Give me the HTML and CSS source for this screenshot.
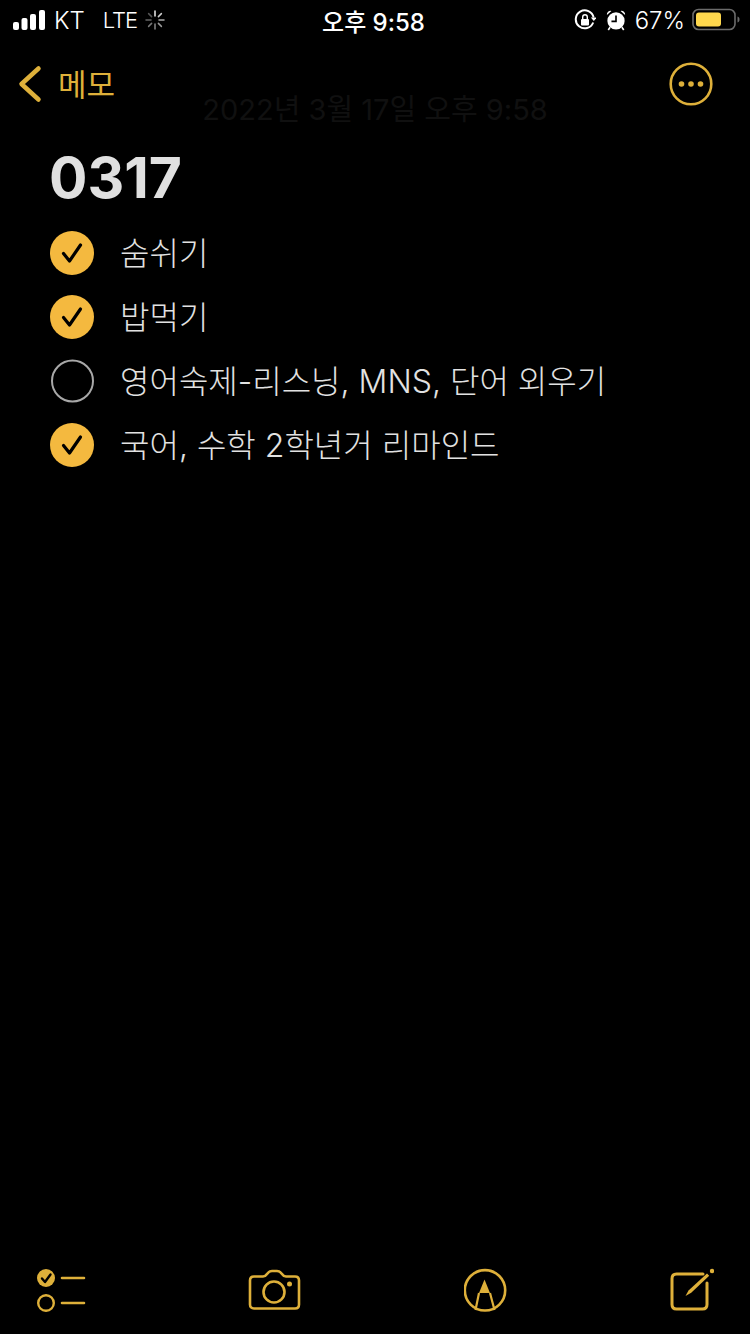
FILE: index.html
```html
<!DOCTYPE html>
<html lang="ko">
<head>
  <meta charset="UTF-8" />
  <meta name="viewport" content="width=device-width, initial-scale=1" />
  <title>메모</title>
  <link rel="stylesheet" href="styles.css">
</head>
<body>

<header class="status-bar">
  <div class="status-left">
    <svg class="signal" width="34" height="22" viewBox="0 0 34 22" fill="#fff">
      <rect x="1" y="13" width="6" height="8" rx="2" />
      <rect x="9.500" y="9" width="6" height="12" rx="2" />
      <rect x="18" y="5" width="6" height="16" rx="2" />
      <rect x="27" y="1" width="6" height="20" rx="2" />
    </svg>
    <span class="carrier">KT</span>
    <span class="network">LTE</span>
    <svg class="spinner" width="20" height="20" viewBox="0 0 20 20">
      <g stroke-width="1.500" stroke-linecap="round">
        <path d="M10 1v5" stroke="#eee" />
        <path d="M16.400 3.600l-3 3" stroke="#ccc" />
        <path d="M19 10h-5" stroke="#aaa" />
        <path d="M16.400 16.400l-3-3" stroke="#999" />
        <path d="M10 19v-5" stroke="#888" />
        <path d="M3.600 16.400l3-3" stroke="#777" />
        <path d="M1 10h5" stroke="#666" />
        <path d="M3.600 3.600l3 3" stroke="#555" />
      </g>
    </svg>
  </div>
  <div class="status-time">오후 9:58</div>
  <div class="status-right">
    <svg width="22" height="22" viewBox="0 0 22 22" fill="none">
      <path d="M19.200 13.500A9 9 0 1 1 19.600 8.500" stroke="#fff" stroke-width="2" />
      <path d="M16.800 8.500h6l-3 3.600z" fill="#fff" />
      <rect x="7" y="10" width="8" height="6.500" rx="1" fill="#fff" />
      <path d="M8.700 10V8a2.300 2.300 0 0 1 4.600 0v2" stroke="#fff" stroke-width="1.400" />
    </svg>
    <svg class="alarm" width="20" height="22" viewBox="0 0 22 24" fill="none">
      <circle cx="11" cy="13" r="9.500" fill="#fff" />
      <path d="M11 7v6.500H6" stroke="#000" stroke-width="1.800" />
      <path d="M1 6.500a4 4 0 0 1 5-4.500zM21 6.500a4 4 0 0 0-5-4.500z" fill="#fff" />
      <path d="M4.500 20l-2 3M17.500 20l2 3" stroke="#fff" stroke-width="1.800" />
    </svg>
    <span class="percent">67%</span>
    <svg width="54" height="24" viewBox="0 0 54 24" fill="none">
      <rect x="1" y="1.500" width="42" height="20" rx="5.500" stroke="#6b6b6b" stroke-width="1.600" />
      <rect x="4" y="4.500" width="25" height="14" rx="3" fill="#ffd84d" />
      <path d="M45.500 8.500c1.600.6 2 1.600 2 3s-.4 2.400-2 3z" fill="#6b6b6b" />
    </svg>
  </div>
</header>

<nav class="nav-bar">
  <a class="back-link">
    <svg width="26" height="40" viewBox="0 0 26 40" fill="none">
      <path d="M20.500 4.500L3.500 20l17 15.500" stroke="#deb03a" stroke-width="4.500" stroke-linecap="round" stroke-linejoin="round" />
    </svg>
    <span class="back-label">메모</span>
  </a>
  <svg width="44" height="44" viewBox="0 0 44 44" fill="none">
    <circle cx="22" cy="22" r="20.300" stroke="#deb03a" stroke-width="2.600" />
    <circle cx="12.500" cy="22" r="2.800" fill="#deb03a" />
    <circle cx="22" cy="22" r="2.800" fill="#deb03a" />
    <circle cx="31.500" cy="22" r="2.800" fill="#deb03a" />
  </svg>
</nav>

<p class="note-date">2022년 3월 17일 오후 9:58</p>

<main class="note">
  <h1 class="note-title">0317</h1>
  <ul class="checklist">
    <li class="check-item">
      <svg class="check-icon" width="44" height="44" viewBox="0 0 44 44" fill="none">
        <circle cx="22" cy="22" r="22" fill="#f4b93f" />
        <path d="M13.500 22.500l6 7.500 11-16" stroke="#000" stroke-width="3.200" stroke-linecap="round" stroke-linejoin="round" />
      </svg>
      <span class="check-text">숨쉬기</span>
    </li>
    <li class="check-item">
      <svg class="check-icon" width="44" height="44" viewBox="0 0 44 44" fill="none">
        <circle cx="22" cy="22" r="22" fill="#f4b93f" />
        <path d="M13.500 22.500l6 7.500 11-16" stroke="#000" stroke-width="3.200" stroke-linecap="round" stroke-linejoin="round" />
      </svg>
      <span class="check-text">밥먹기</span>
    </li>
    <li class="check-item">
      <svg class="check-icon" width="44" height="44" viewBox="0 0 44 44" fill="none">
        <circle cx="22.500" cy="22" r="20.500" stroke="#a8a8a8" stroke-width="2" />
      </svg>
      <span class="check-text">영어숙제-리스닝, MNS, 단어 외우기</span>
    </li>
    <li class="check-item">
      <svg class="check-icon" width="44" height="44" viewBox="0 0 44 44" fill="none">
        <circle cx="22" cy="22" r="22" fill="#f4b93f" />
        <path d="M13.500 22.500l6 7.500 11-16" stroke="#000" stroke-width="3.200" stroke-linecap="round" stroke-linejoin="round" />
      </svg>
      <span class="check-text">국어, 수학 2학년거 리마인드</span>
    </li>
  </ul>
</main>

<footer class="toolbar">
  <svg width="50" height="44" viewBox="0 0 50 44" fill="none">
    <circle cx="10" cy="10" r="9" fill="#deb03a" />
    <path d="M6 10.500l3 3.500 5.500-7.500" stroke="#000" stroke-width="2.400" stroke-linecap="round" stroke-linejoin="round" />
    <circle cx="10" cy="35" r="7.800" stroke="#deb03a" stroke-width="2.400" />
    <path d="M26 10h22M26 35h22" stroke="#deb03a" stroke-width="2.600" stroke-linecap="round" />
  </svg>
  <svg width="54" height="44" viewBox="0 0 54 44" fill="none">
    <path d="M6 8.500h9c2 0 3-1 4-2.500C20.500 4 21.500 3 24 3h5c2.500 0 3.500 1 5 3 1 1.500 2 2.500 4 2.500h9c2.500 0 4 1.500 4 4V36.500c0 2.500-1.500 4-4 4H6c-2.500 0-4-1.500-4-4V12.500c0-2.500 1.500-4 4-4z" stroke="#deb03a" stroke-width="2.600" stroke-linejoin="round" />
    <circle cx="26" cy="24" r="10.500" stroke="#deb03a" stroke-width="2.600" />
    <circle cx="41.500" cy="16" r="2.500" fill="#deb03a" />
  </svg>
  <svg width="44" height="44" viewBox="0 0 44 44" fill="none">
    <circle cx="21" cy="22.300" r="20.200" stroke="#deb03a" stroke-width="2.600" />
    <path d="M20.500 11.500l5.500 13.500H15z" fill="#deb03a" />
    <path d="M15 25l-3.500 17M26 25l4.500 17" stroke="#deb03a" stroke-width="2.200" />
  </svg>
  <svg width="44" height="44" viewBox="0 0 44 44" fill="none">
    <path d="M33 6H6.500C3.500 6 2 7.500 2 10.500v26C2 39.500 3.500 41 6.500 41h26c3 0 4.500-1.500 4.500-4.500V15" stroke="#deb03a" stroke-width="3" stroke-linecap="round" />
    <path d="M15.500 28l3-5.500L37 5.500l2.200 2.200-18 17z" fill="#deb03a" />
    <circle cx="42" cy="3" r="2.200" fill="#deb03a" />
  </svg>
</footer>

</body>
</html>
```

FILE: styles.css
```css
* {
  box-sizing: border-box;
}
body {
  font-family: Inter, 'Noto Sans CJK KR', sans-serif;
  background: #000;
  margin: 0;
  padding: 0;
  color: #fff;
  width: 750px;
  height: 1334px;
  display: flex;
  flex-direction: column;
  overflow: hidden;
}
.status-bar {
  height: 40px;
  padding: 0 4px 0 12px;
  display: grid;
  grid-template-columns: 1fr auto 1fr;
  align-items: center;
  font-size: 24px;
}
.status-left {
  display: flex;
  align-items: center;
}
.status-left .carrier {
  margin-left: 8px;
  font-weight: 300;
}
.status-left .network {
  margin-left: 18px;
  font-size: 22px;
  letter-spacing: -1px;
  font-weight: 300;
}
.status-left .spinner {
  margin-left: 8px;
}
.status-time {
  font-weight: 500;
  margin-left: -11px;
}
.status-right {
  display: flex;
  align-items: center;
  justify-content: flex-end;
  gap: 10px;
}
.status-right .percent {
  font-weight: 300;
  margin-left: -1px;
  margin-right: -3px;
}
.nav-bar {
  height: 44px;
  margin-top: 22px;
  padding: 0 37px 0 18px;
  display: flex;
  align-items: center;
  justify-content: space-between;
}
.back-link {
  display: flex;
  align-items: center;
  gap: 14px;
  color: #deb03a;
  font-size: 31px;
}
.back-label {
  padding-bottom: 4px;
}
.note-date {
  margin: -10px 0 0;
  height: 28px;
  line-height: 28px;
  text-align: center;
  font-size: 29px;
  color: #101010;
}
.note {
  padding: 0 50px;
}
.note-title {
  margin: 22px 0 0 -1px;
  height: 64px;
  line-height: 64px;
  font-size: 57px;
  font-weight: 700;
  color: #e0e0e0;
}
.checklist {
  list-style: none;
  margin: 11px 0 0;
  padding: 0;
}
.check-item {
  height: 64px;
  display: flex;
  align-items: center;
  gap: 26px;
  font-size: 32px;
  font-weight: 300;
  color: #e2e2e2;
}
.check-icon {
  flex: none;
}
.check-text {
  padding-bottom: 5px;
}
.toolbar {
  margin-top: auto;
  height: 66px;
  padding: 0 36px;
  display: flex;
  align-items: flex-start;
  justify-content: space-between;
}
```
